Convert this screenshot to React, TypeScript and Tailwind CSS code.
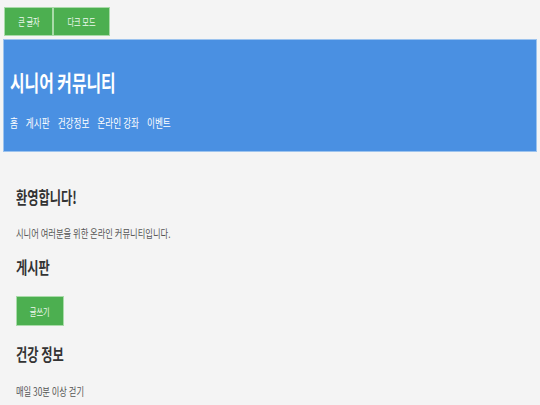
import React from "react";

// The reference text is narrow, so every label is squeezed sideways.
function Squeeze({
  children,
  center = false,
}: {
  children: React.ReactNode;
  center?: boolean;
}) {
  return (
    <span
      className={
        "inline-block whitespace-nowrap scale-x-[0.72] " +
        (center ? "origin-center" : "origin-left")
      }
    >
      {children}
    </span>
  );
}

const navItems = ["홈", "게시판", "건강정보", "온라인 강좌", "이벤트"];

export default function App() {
  return (
    <div className="min-h-screen bg-[#f4f4f4] font-['Noto_Sans_CJK_KR',sans-serif] text-[#333]">
      {/* Accessibility toggles */}
      <div className="flex pl-[4px] pt-[7px]">
        <button className="flex h-[29px] w-[49px] items-center justify-center border border-[#a9dba9] bg-[#4caf50] text-[10px] text-[#eef8ee]">
          <Squeeze center>큰 글자</Squeeze>
        </button>
        <button className="flex h-[29px] w-[57px] items-center justify-center border border-[#a9dba9] bg-[#4caf50] text-[10px] text-[#eef8ee]">
          <Squeeze center>다크 모드</Squeeze>
        </button>
      </div>

      {/* Header */}
      <header className="mx-[3px] mt-[3px] h-[113px] border border-[#9cc3ee] bg-[#4a90e2] pl-[6px] pt-[26px] text-white">
        <h1 className="h-[30px] text-[22px] font-semibold leading-[30px]">
          <Squeeze>시니어 커뮤니티</Squeeze>
        </h1>
        <nav className="mt-[19px] h-[16px] text-[12px] leading-[16px]">
          <Squeeze>
            <span className="flex gap-[11px]">
              {navItems.map((item) => (
                <a key={item} href="#" className="text-white">
                  {item}
                </a>
              ))}
            </span>
          </Squeeze>
        </nav>
      </header>

      {/* Main content */}
      <main className="pl-[16px]">
        <h2 className="mt-[34px] h-[22px] text-[17px] font-bold leading-[22px]">
          <Squeeze>환영합니다!</Squeeze>
        </h2>
        <p className="mt-[17px] h-[16px] text-[11.5px] leading-[16px] text-[#555]">
          <Squeeze>시니어 여러분을 위한 온라인 커뮤니티입니다.</Squeeze>
        </p>

        <h2 className="mt-[15px] h-[22px] text-[17px] font-bold leading-[22px]">
          <Squeeze>게시판</Squeeze>
        </h2>
        <button className="mt-[18px] flex h-[30px] w-[48px] items-center justify-center border border-[#a9dba9] bg-[#4caf50] text-[10px] text-[#eef8ee]">
          <Squeeze center>글쓰기</Squeeze>
        </button>

        <h2 className="mt-[17px] h-[22px] text-[17px] font-bold leading-[22px]">
          <Squeeze>건강 정보</Squeeze>
        </h2>
        <p className="mt-[18px] h-[16px] text-[11.5px] leading-[16px] text-[#555]">
          <Squeeze>매일 30분 이상 걷기</Squeeze>
        </p>
      </main>
    </div>
  );
}
